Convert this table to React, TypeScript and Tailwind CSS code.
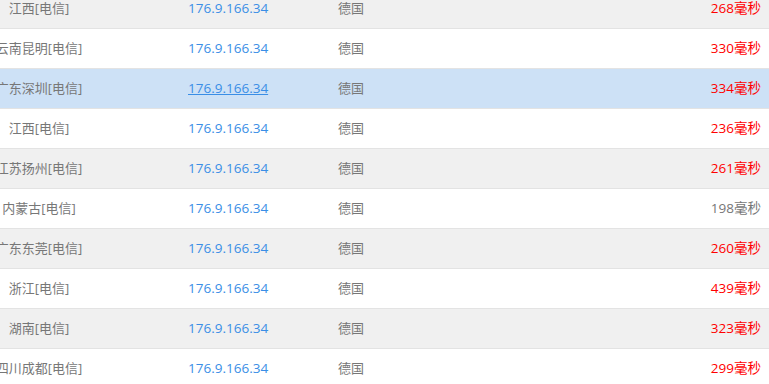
import React from "react";

type Row = { loc: string; ip: string; country: string; ms: number };

const ROWS: Row[] = [
  { loc: "江西[电信]", ip: "176.9.166.34", country: "德国", ms: 268 },
  { loc: "云南昆明[电信]", ip: "176.9.166.34", country: "德国", ms: 330 },
  { loc: "广东深圳[电信]", ip: "176.9.166.34", country: "德国", ms: 334 },
  { loc: "江西[电信]", ip: "176.9.166.34", country: "德国", ms: 236 },
  { loc: "江苏扬州[电信]", ip: "176.9.166.34", country: "德国", ms: 261 },
  { loc: "内蒙古[电信]", ip: "176.9.166.34", country: "德国", ms: 198 },
  { loc: "广东东莞[电信]", ip: "176.9.166.34", country: "德国", ms: 260 },
  { loc: "浙江[电信]", ip: "176.9.166.34", country: "德国", ms: 439 },
  { loc: "湖南[电信]", ip: "176.9.166.34", country: "德国", ms: 323 },
  { loc: "四川成都[电信]", ip: "176.9.166.34", country: "德国", ms: 299 },
];

// row under the mouse in the screenshot
const HOVER = 2;

export default function App() {
  return (
    <div
      className="w-[769px] h-[384px] overflow-hidden bg-white text-[13px] text-[#777]"
      style={{ fontFamily: '"Open Sans", "Noto Sans CJK SC", sans-serif' }}
    >
      <div className="-mt-[11px]">
        {ROWS.map((r, i) => {
          const hovered = i === HOVER;
          const bg = hovered ? "bg-[#cde1f6]" : i % 2 === 0 ? "bg-[#f0f0f0]" : "bg-white";
          return (
            <div key={i} className={`flex items-center h-[40px] border-b border-[#e3e3e3] ${bg}`}>
              <div className="-ml-[40px] w-[158px] shrink-0 text-center whitespace-nowrap">{r.loc}</div>
              <div className="w-[70px] shrink-0" />
              <div className={`w-[150px] shrink-0 text-[13.5px] text-[#3a8ee6] ${hovered ? "underline" : ""}`}>{r.ip}</div>
              <div className="flex-1">{r.country}</div>
              <div className={`pr-[8px] text-[13.5px] ${r.ms >= 200 ? "text-[#ff0000]" : "text-[#777]"}`}>{r.ms}毫秒</div>
            </div>
          );
        })}
      </div>
    </div>
  );
}
